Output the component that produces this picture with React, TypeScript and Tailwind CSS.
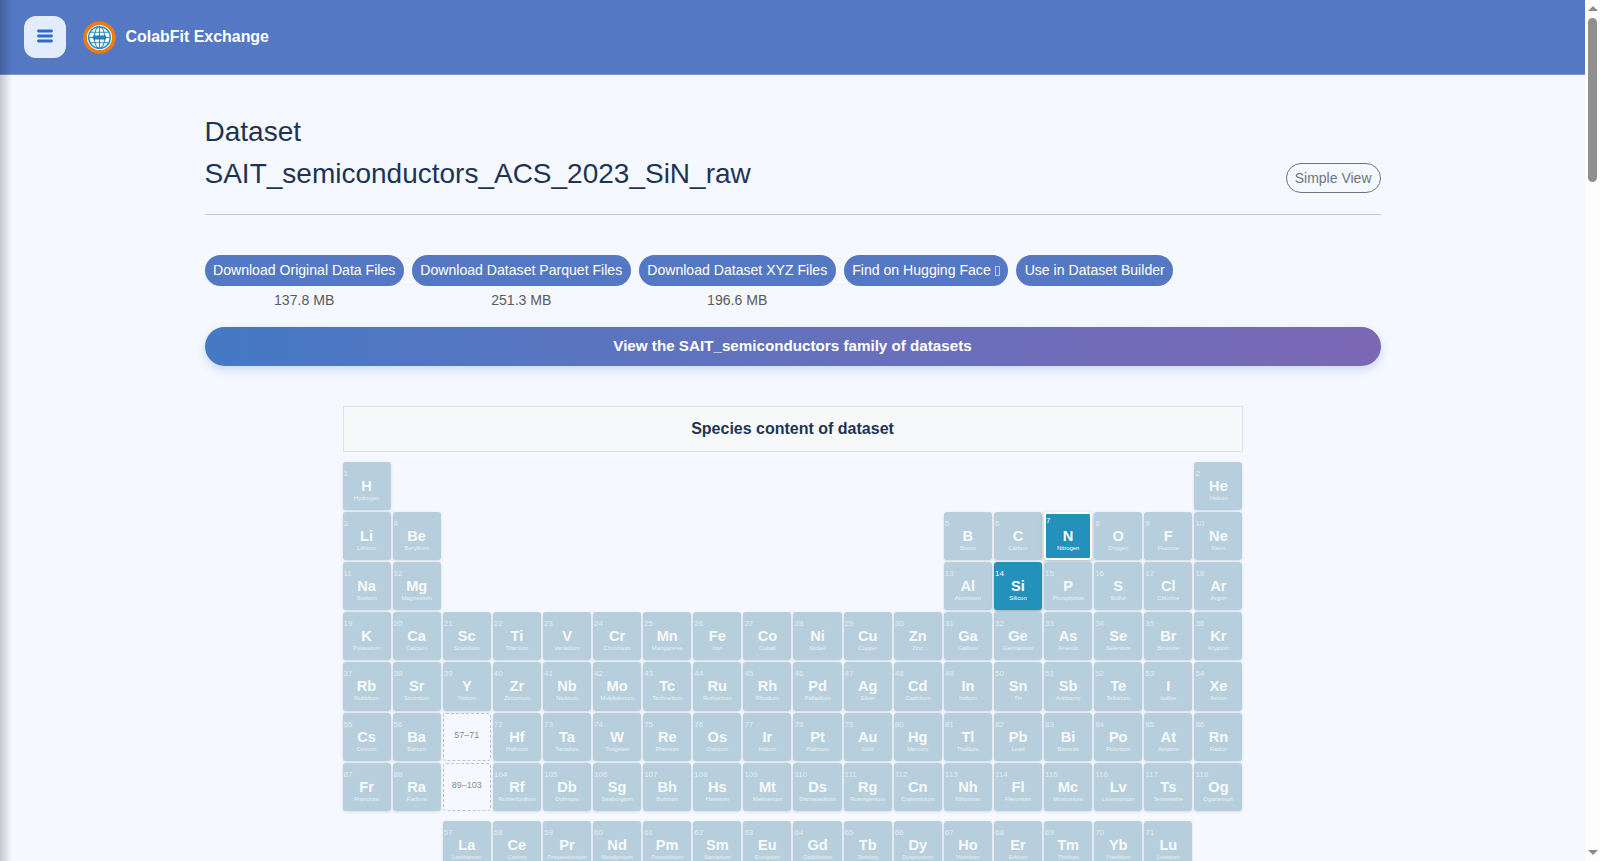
import React from "react";

const NAMES =
  "H Hydrogen,He Helium,Li Lithium,Be Beryllium,B Boron,C Carbon,N Nitrogen,O Oxygen,F Fluorine,Ne Neon,Na Sodium,Mg Magnesium,Al Aluminum,Si Silicon,P Phosphorus,S Sulfur,Cl Chlorine,Ar Argon,K Potassium,Ca Calcium,Sc Scandium,Ti Titanium,V Vanadium,Cr Chromium,Mn Manganese,Fe Iron,Co Cobalt,Ni Nickel,Cu Copper,Zn Zinc,Ga Gallium,Ge Germanium,As Arsenic,Se Selenium,Br Bromine,Kr Krypton,Rb Rubidium,Sr Strontium,Y Yttrium,Zr Zirconium,Nb Niobium,Mo Molybdenum,Tc Technetium,Ru Ruthenium,Rh Rhodium,Pd Palladium,Ag Silver,Cd Cadmium,In Indium,Sn Tin,Sb Antimony,Te Tellurium,I Iodine,Xe Xenon,Cs Cesium,Ba Barium,La Lanthanum,Ce Cerium,Pr Praseodymium,Nd Neodymium,Pm Promethium,Sm Samarium,Eu Europium,Gd Gadolinium,Tb Terbium,Dy Dysprosium,Ho Holmium,Er Erbium,Tm Thulium,Yb Ytterbium,Lu Lutetium,Hf Hafnium,Ta Tantalum,W Tungsten,Re Rhenium,Os Osmium,Ir Iridium,Pt Platinum,Au Gold,Hg Mercury,Tl Thallium,Pb Lead,Bi Bismuth,Po Polonium,At Astatine,Rn Radon,Fr Francium,Ra Radium,Ac Actinium,Th Thorium,Pa Protactinium,U Uranium,Np Neptunium,Pu Plutonium,Am Americium,Cm Curium,Bk Berkelium,Cf Californium,Es Einsteinium,Fm Fermium,Md Mendelevium,No Nobelium,Lr Lawrencium,Rf Rutherfordium,Db Dubnium,Sg Seaborgium,Bh Bohrium,Hs Hassium,Mt Meitnerium,Ds Darmstadtium,Rg Roentgenium,Cn Copernicium,Nh Nihonium,Fl Flerovium,Mc Moscovium,Lv Livermorium,Ts Tennessine,Og Oganesson".split(
    ","
  );

const range = (a: number, b: number) => {
  const out: number[] = [];
  for (let i = a; i <= b; i++) out.push(i);
  return out;
};
const blanks = (n: number) => Array(n).fill(0) as number[];

// 0 = empty slot, -1 / -2 = the f-block placeholders
const TABLE: number[] = [
  1, ...blanks(16), 2,
  3, 4, ...blanks(10), ...range(5, 10),
  11, 12, ...blanks(10), ...range(13, 18),
  ...range(19, 36),
  ...range(37, 54),
  55, 56, -1, ...range(72, 86),
  87, 88, -2, ...range(104, 118),
];
const ACTIVE = [7, 14];

function Element({ z }: { z: number }) {
  const [sym, name] = NAMES[z - 1].split(" ");
  const active = ACTIVE.includes(z);
  const bg = active ? "bg-[#2490bc]" : "bg-[#b7cfdc]";
  let border = "shadow-[0_1px_3px_rgba(0,0,0,0.12)]";
  if (z === 7) border = "border-2 border-white shadow-[0_2px_5px_rgba(0,0,0,0.25)]";
  if (z === 14) border = "shadow-[0_2px_3px_rgba(0,0,0,0.3)]";
  return (
    <div className={`relative flex aspect-square flex-col items-center rounded-[3px] text-white ${bg} ${border}`}>
      <span className={`absolute text-[8px] leading-none ${z === 7 ? "top-[3px] left-0" : "top-[8px] left-[1px]"} ${active ? "" : "opacity-60"}`}>
        {z}
      </span>
      <span className={`font-bold ${z === 7 ? "mt-[15px] leading-[15px]" : "mt-[16px] leading-[16px]"} text-[14.6px] ${active ? "" : "opacity-90"}`}>{sym}</span>
      <span className={`whitespace-nowrap text-[5.9px] leading-[8px] ${active ? "" : "opacity-70"}`}>{name}</span>
    </div>
  );
}

function Placeholder({ label }: { label: string }) {
  return (
    <div className="flex aspect-square items-center justify-center rounded-[3px] border border-dashed border-[#c4c4c4] pb-[2px] text-[9px] text-[#8d8d8d]">
      {label}
    </div>
  );
}

function Logo() {
  return (
    <svg viewBox="0 0 32 32" className="h-[33px] w-[33px]">
      <circle cx="16" cy="16" r="14" fill="#fff" stroke="#ee7a12" strokeWidth="3.6" />
      <g fill="none" stroke="#2a8fc4" strokeWidth="1">
        <circle cx="16" cy="16" r="10.5" strokeWidth="1.4" />
        <ellipse cx="16" cy="16" rx="5" ry="10.5" />
        <path d="M16 5.5v21M6.5 11h19M5.5 16h21M6.5 21h19" />
      </g>
      <rect x="9.5" y="14" width="13" height="4" fill="#2a7fb8" />
    </svg>
  );
}

const DOWNLOADS = [
  { label: "Download Original Data Files", size: "137.8 MB" },
  { label: "Download Dataset Parquet Files", size: "251.3 MB" },
  { label: "Download Dataset XYZ Files", size: "196.6 MB" },
  { label: "Find on Hugging Face", tofu: true },
  { label: "Use in Dataset Builder" },
];

export default function App() {
  return (
    <div className="flex h-screen overflow-hidden bg-[#fdfdfd] font-['Liberation_Sans',Arial,sans-serif]">
      <div className="relative h-full min-w-0 flex-1 overflow-hidden bg-[#f5f9ff]">
        <header className="flex h-[75px] items-center border-b border-[#7b97d3] bg-[#5478c4] pl-[24px]">
          <button className="flex h-[42px] w-[42px] items-center justify-center rounded-[12px] bg-[#e3ecfd]">
            <svg viewBox="0 0 16 14" className="mb-[2px] h-[14px] w-[16px]" fill="none" stroke="#2b6ad0" strokeWidth="2.8" strokeLinecap="round">
              <path d="M1.5 2h13M1.5 7h13M1.5 12h13" />
            </svg>
          </button>
          <div className="ml-[17px]">
            <Logo />
          </div>
          <span className="ml-[9.5px] text-[15.95px] font-bold text-white">ColabFit Exchange</span>
        </header>

        <main className="mx-auto w-[1176px]">
          <div className="flex items-end justify-between border-b border-[#c4c8d2] pt-[36px] pb-[19px]">
            <h1 className="text-[28px] leading-[42px] text-[#1e3454]">
              Dataset
              <br />
              SAIT_semiconductors_ACS_2023_SiN_raw
            </h1>
            <button className="mb-[2px] rounded-full border border-[#6c757d] px-[8px] py-[4px] text-[14px] leading-[20px] text-[#6c757d]">
              Simple View
            </button>
          </div>

          <div className="mt-[40px] flex gap-[8px]">
            {DOWNLOADS.map((d) => (
              <div key={d.label} className="flex flex-col items-center">
                <button className="flex h-[31px] items-center rounded-full bg-[#5478c4] px-[8.5px] text-[14.08px] whitespace-pre text-white">
                  {d.label}
                  {d.tofu && (
                    <>
                      {" "}
                      <span className="h-[10px] w-[5px] border border-white/60" />
                    </>
                  )}
                </button>
                {d.size && <span className="mt-[4px] text-[14.08px] leading-[20px] text-[#5a5a5a]">{d.size}</span>}
              </div>
            ))}
          </div>

          <div className="mt-[17px] flex h-[39px] items-center justify-center rounded-full bg-gradient-to-r from-[#4479c4] to-[#7b68b5] text-[15.2px] font-bold text-white shadow-[0_4px_10px_rgba(84,120,196,0.25)]">
            View the SAIT_semiconductors family of datasets
          </div>

          <div className="mx-auto mt-[40px] w-[900px]">
            <div className="flex h-[46px] items-center justify-center border border-[#dee2e6] bg-[#f8f9fb] text-[16px] font-bold text-[#1e3454]">
              Species content of dataset
            </div>
            <div className="mt-[10px] grid grid-cols-18 gap-[2px]">
              {TABLE.map((z, i) =>
                z > 0 ? (
                  <Element key={i} z={z} />
                ) : z === 0 ? (
                  <div key={i} />
                ) : (
                  <Placeholder key={i} label={z === -1 ? "57–71" : "89–103"} />
                )
              )}
            </div>
            <div className="mt-[10px] grid grid-cols-18 gap-[2px]">
              <div />
              <div />
              {range(57, 71).map((z) => (
                <Element key={z} z={z} />
              ))}
            </div>
          </div>
        </main>

        <div className="absolute inset-y-0 left-0 w-[12px] bg-gradient-to-r from-black/20 to-transparent" />
      </div>

      <div className="flex h-full w-[15px] flex-col items-center bg-[#fdfdfd]">
        <div className="mt-[6px] h-0 w-0 border-x-[5px] border-b-[5px] border-x-transparent border-b-[#8a8a8a]" />
        <div className="mt-[7px] h-[164px] w-[9px] rounded-full bg-[#8f8f8f]" />
        <div className="mt-auto mb-[6px] h-0 w-0 border-x-[5px] border-t-[5px] border-x-transparent border-t-[#8a8a8a]" />
      </div>
    </div>
  );
}
